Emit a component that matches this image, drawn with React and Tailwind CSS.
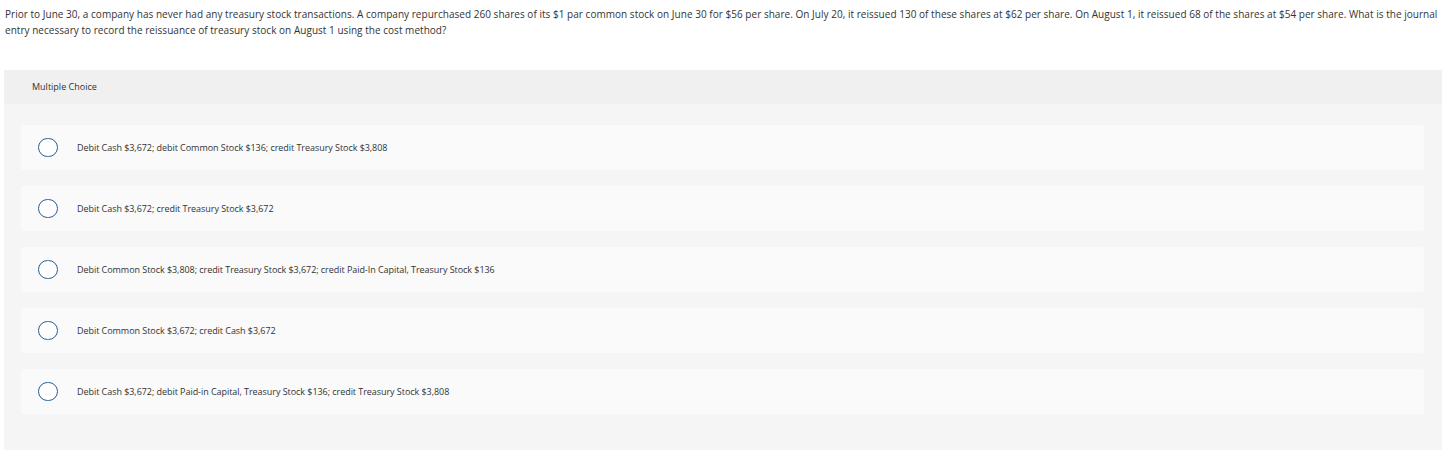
const options = [
  'Debit Cash $3,672; debit Common Stock $136; credit Treasury Stock $3,808',
  'Debit Cash $3,672; credit Treasury Stock $3,672',
  'Debit Common Stock $3,808; credit Treasury Stock $3,672; credit Paid-In Capital, Treasury Stock $136',
  'Debit Common Stock $3,672; credit Cash $3,672',
  'Debit Cash $3,672; debit Paid-in Capital, Treasury Stock $136; credit Treasury Stock $3,808',
];

export default function App() {
  return (
    <div className="w-[1450px] h-[466px] bg-white text-[#333] font-['Open_Sans',sans-serif]">
      <p className="pl-[5px] pr-[8px] pt-[6px] text-[10px] leading-[16px] tracking-[0.03px]">
        Prior to June 30, a company has never had any treasury stock transactions. A company repurchased 260 shares of its $1 par common stock on June 30 for $56 per share. On July 20, it reissued 130 of these shares at $62 per share. On August 1, it reissued 68 of the shares at $54 per share. What is the journal entry necessary to record the reissuance of treasury stock on August 1 using the cost method?
      </p>

      <div className="mt-[32px] ml-[4px] w-[1438px] h-[380px] bg-[#f5f5f5] flex flex-col">
        <div className="h-[34px] bg-[#f0f0f0] pl-[28px] flex items-center text-[9px]">
          Multiple Choice
        </div>
        <div className="pt-[21px] pl-[17px] flex flex-col gap-[16px]">
          {options.map((opt, i) => (
            <div key={i} className="w-[1403px] h-[45px] bg-[#fafafa] rounded-[2px] flex items-center">
              <span className="ml-[17px] w-[20px] h-[19px] rounded-full border-[1.5px] border-[#2b5d94] bg-white shrink-0" />
              <span className="ml-[19px] text-[9px] tracking-[-0.05px]">{opt}</span>
            </div>
          ))}
        </div>
      </div>
    </div>
  );
}
